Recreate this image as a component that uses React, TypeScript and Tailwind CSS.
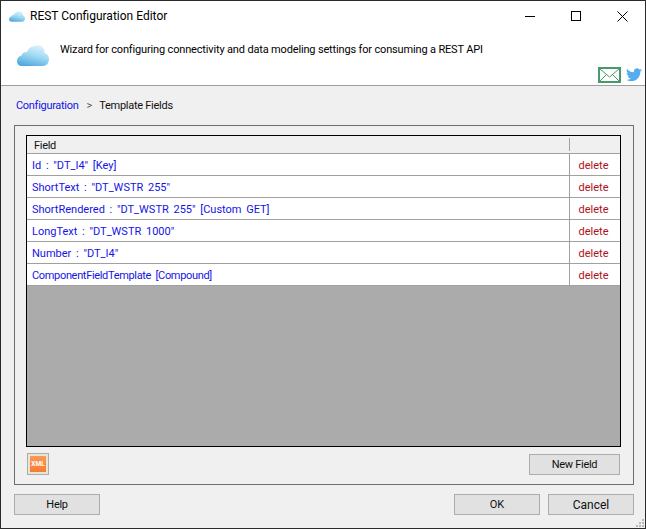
import React from "react";

const rows = [
  { t: 'Id : "DT_I4" [Key]', c: "tracking-[0px]" },
  { t: 'ShortText : "DT_WSTR 255"', c: "tracking-[0px]" },
  { t: 'ShortRendered : "DT_WSTR 255" [Custom GET]', c: "tracking-[0px]" },
  { t: 'LongText : "DT_WSTR 1000"', c: "tracking-[0px]" },
  { t: 'Number : "DT_I4"', c: "tracking-[0px]" },
  { t: "ComponentFieldTemplate [Compound]", c: "tracking-[-0.33px]" },
];

function Cloud({ w, h }: { w: number; h: number }) {
  return (
    <svg width={w} height={h} viewBox="0 0 32 21">
      <defs>
        <linearGradient id="cl" x1="0.7" y1="0" x2="0.3" y2="1">
          <stop offset="0" stopColor="#dff3fb" />
          <stop offset="0.5" stopColor="#9ed8f3" />
          <stop offset="1" stopColor="#4fa9de" />
        </linearGradient>
      </defs>
      <path
        d="M5 21C2 21 0 19 0 16c0-3 2-5 4.500-5.500C5 8 7.500 6.500 10 7c1-3 4-6 8-6 1.500-1 5-1 7 .5 2 1.500 3 4 2.500 6.500 2.500.5 4.500 3 4.500 6 0 4-2.500 7-6 7z"
        fill="url(#cl)"
      />
    </svg>
  );
}

function Btn({ label, className }: { label: string; className: string }) {
  return (
    <div className={`flex items-center justify-center bg-[#e1e1e1] border border-[#adadad] text-[#101010] ${className}`}>
      {label}
    </div>
  );
}

export default function App() {
  return (
    <div className="w-[646px] h-[529px] relative flex flex-col bg-[#f0f0f0] border border-[#2b2b2b] overflow-hidden font-['Roboto','Liberation_Sans',sans-serif] text-[11px] leading-none text-[#111]">
      <div className="bg-white h-[84px] flex flex-col shrink-0">
        <div className="h-[30px] flex items-center shrink-0">
          <div className="ml-[8px] w-[18px] flex"><Cloud w={16} h={11} /></div>
          <span className="ml-[3px] text-[12px] text-black">REST Configuration Editor</span>
          <div className="ml-auto flex items-center">
            <div className="w-[46px] flex justify-center">
              <div className="w-[10px] h-px bg-black" />
            </div>
            <div className="w-[46px] flex justify-center">
              <div className="w-[10px] h-[10px] border border-black" />
            </div>
            <div className="w-[46px] flex justify-center">
              <svg width="11" height="11" viewBox="0 0 11 11"><path d="M.5.5l10 10M10.500.5l-10 10" stroke="#000" strokeWidth="1" /></svg>
            </div>
          </div>
        </div>
        <div className="flex items-start">
          <div className="ml-[16px] mt-[14px]"><Cloud w={32} h={21} /></div>
          <span className="ml-[11px] mt-[13px] text-black tracking-[-0.16px]">Wizard for configuring connectivity and data modeling settings for consuming a REST API</span>
        </div>
        <div className="mt-auto flex justify-end items-end gap-[5px] pr-[3px] pb-[2px]">
          <svg width="23" height="16" viewBox="0 0 23 16">
            <rect x="1" y="1" width="21" height="14" fill="#fff" stroke="#479a6a" strokeWidth="2" />
            <path d="M2 2l9.500 8L21 2M2 14l6.500-6.500M21 14l-6.500-6.500" fill="none" stroke="#479a6a" strokeWidth="1" />
          </svg>
          <svg width="16" height="14" viewBox="0 0 24 20" className="mb-px">
            <path fill="#55acee" d="M24 2.400c-.9.400-1.800.7-2.800.8 1-.6 1.800-1.600 2.200-2.700-1 .6-2 1-3.100 1.200C19.300.7 18 0 16.600 0c-2.700 0-4.900 2.200-4.900 4.900 0 .4 0 .8.100 1.100C7.700 5.800 4.100 3.900 1.700.9 1.200 1.600 1 2.500 1 3.400c0 1.700.9 3.200 2.200 4.100-.8 0-1.600-.2-2.200-.6v.1c0 2.400 1.700 4.400 3.900 4.800-.4.100-.8.200-1.300.2-.3 0-.6 0-.9-.1.600 2 2.400 3.400 4.600 3.400-1.700 1.300-3.800 2.100-6.100 2.100-.4 0-.8 0-1.200-.1C2.200 18.700 4.800 19.500 7.500 19.500c9.100 0 14-7.500 14-14v-.6c1-.7 1.800-1.600 2.500-2.500z" />
          </svg>
        </div>
      </div>
      <div className="h-px bg-[#a0a0a0] shrink-0" />

      <div className="h-[39px] flex items-center pl-[15px] shrink-0">
        <span className="text-[#1414e6] tracking-[-0.3px]">Configuration</span>
        <span className="ml-[8px] text-[#555]">&gt;</span>
        <span className="ml-[7px] tracking-[-0.27px]">Template Fields</span>
      </div>

      <div className="ml-[13px] w-[620px] h-[360px] border border-[#6e6e6e] pl-[11px] pt-[9px] flex flex-col shrink-0">
        <div className="w-[595px] h-[312px] border border-black bg-[#ababab] flex flex-col shrink-0">
          <div className="h-[17px] bg-[#f0f0f0] flex shrink-0">
            <div className="flex-1 pl-[7px] pt-px flex items-center tracking-[-0.3px]">Field</div>
            <div className="w-px h-[13px] mt-[2px] bg-[#a0a0a0]" />
            <div className="w-[50px]" />
          </div>
          {rows.map((r) => (
            <div key={r.t} className="h-[22px] bg-white border-t border-[#a0a0a0] flex shrink-0">
              <div className={`flex-1 pl-[5px] pt-px flex items-center text-[#1414e6] whitespace-pre [word-spacing:2px] ${r.c}`}>{r.t}</div>
              <div className="w-px bg-[#a0a0a0]" />
              <div className="w-[50px] pr-[3px] pt-px flex items-center justify-center text-[#b01020]">delete</div>
            </div>
          ))}
          <div className="h-px bg-[#a0a0a0] shrink-0" />
        </div>
        <div className="w-[595px] flex items-start justify-between mt-[6px]">
          <div className="ml-px w-[22px] h-[22px] border border-[#adadad] bg-[#e8e4d8] flex items-center justify-center">
            <div className="w-[16px] h-[16px] bg-gradient-to-b from-[#fb9a55] to-[#f57d30] flex items-center justify-center text-[6.500px] font-bold text-white">XML</div>
          </div>
          <Btn label="New Field" className="mt-px mr-px w-[91px] h-[21px] tracking-[-0.3px]" />
        </div>
      </div>

      <div className="flex mt-[9px] pl-[13px] pr-[11px] shrink-0">
        <Btn label="Help" className="w-[86px] h-[21px] tracking-[-0.3px]" />
        <Btn label="OK" className="ml-auto w-[86px] h-[21px]" />
        <Btn label="Cancel" className="ml-[8px] w-[86px] h-[21px] text-[12px]" />
      </div>

      <svg className="absolute right-0 bottom-0" width="9" height="9" viewBox="0 0 9 9" fill="#b8b8b8">
        <rect x="6" y="0" width="2" height="2" />
        <rect x="3" y="3" width="2" height="2" />
        <rect x="6" y="3" width="2" height="2" />
        <rect x="0" y="6" width="2" height="2" />
        <rect x="3" y="6" width="2" height="2" />
        <rect x="6" y="6" width="2" height="2" />
      </svg>
    </div>
  );
}
